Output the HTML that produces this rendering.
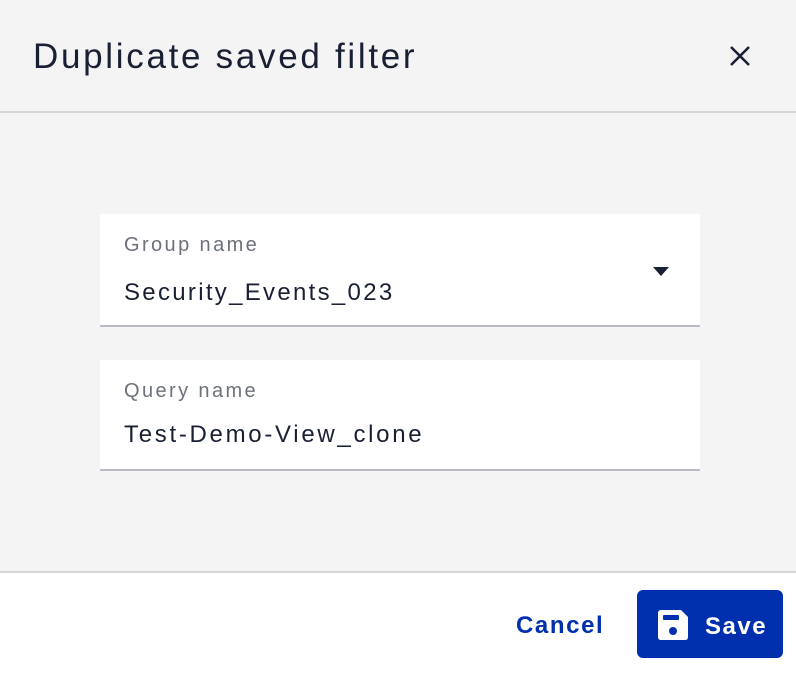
<!DOCTYPE html>
<html><head><style>
*{margin:0;padding:0;box-sizing:border-box}
body{width:796px;height:674px;background:#fff;font-family:"Liberation Sans",sans-serif;position:relative;overflow:hidden}
.hdr{position:absolute;left:0;top:0;width:796px;height:113px;background:#f4f4f4;border-bottom:2px solid #d6d6d6}
.title{position:absolute;left:33px;top:37px;font-size:35px;color:#1a2033;letter-spacing:2.7px}
.body{position:absolute;left:0;top:113px;width:796px;height:460px;background:#f4f4f4;border-bottom:2px solid #d6d6d6}
.field{position:absolute;left:100px;width:600px;background:#fff;border-bottom:2px solid #b8bcc2}
.lbl{position:absolute;left:24px;font-size:20px;color:#6c717a;letter-spacing:2.4px}
.val{position:absolute;left:24px;font-size:24px;color:#1a2033;letter-spacing:2.3px}
.btn{position:absolute;left:637px;top:590px;width:146px;height:68px;background:#0030ad;border-radius:6px;color:#fff;font-weight:bold;font-size:24px}
.cancel{position:absolute;left:516px;top:612px;font-size:24px;font-weight:bold;color:#0030ad;letter-spacing:1.6px}
</style></head><body>
<div class="hdr"><div class="title">Duplicate saved filter</div>
<svg style="position:absolute;left:729px;top:45px" width="22" height="22" viewBox="0 0 22 22"><path d="M2 2L20 20M20 2L2 20" stroke="#1a2033" stroke-width="2.6"/></svg></div>
<div class="body"></div>
<div class="field" style="top:214px;height:113px"><div class="lbl" style="top:20px">Group name</div><div class="val" style="top:65px">Security_Events_023</div>
<svg style="position:absolute;left:553px;top:53px" width="16" height="10"><path d="M0 0H16L8 9Z" fill="#1a2033"/></svg></div>
<div class="field" style="top:360px;height:111px"><div class="lbl" style="top:20px">Query name</div><div class="val" style="top:61px;letter-spacing:2.7px">Test-Demo-View_clone</div></div>
<div class="cancel">Cancel</div>
<div class="btn"><svg style="position:absolute;left:21px;top:20px" width="30" height="30" viewBox="0 0 30 30"><path d="M3 0H23L30 7V27Q30 30 27 30H3Q0 30 0 27V3Q0 0 3 0Z" fill="#fff"/><rect x="5" y="5" width="16" height="5" rx="1" fill="#0030ad"/><circle cx="15" cy="21" r="4" fill="#0030ad"/></svg><span style="position:absolute;left:68px;top:23px;letter-spacing:1.5px">Save</span></div>
</body></html>
